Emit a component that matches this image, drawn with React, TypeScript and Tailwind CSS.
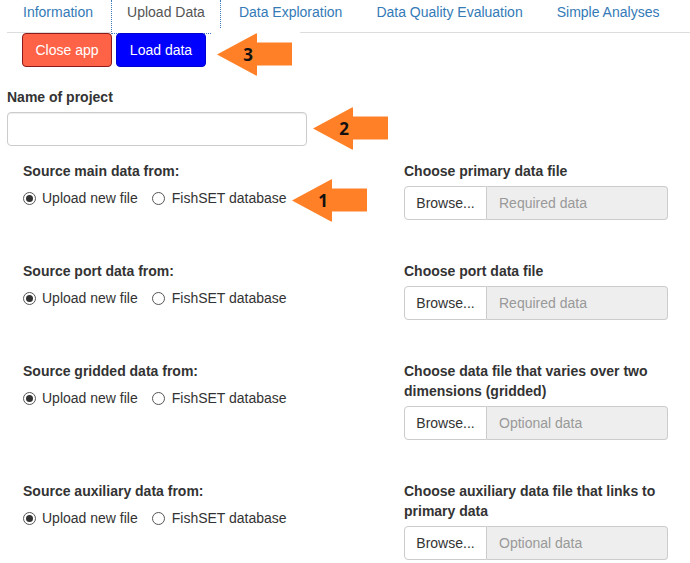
import React from "react";

function Arrow({ n }: { n: string }) {
  return (
    <svg width="75" height="43" viewBox="0 0 75 43">
      <path d="M0 21.5 L39 0.5 Q40 0 40 1 L40 9.5 L75 9.5 L75 32.5 L40 32.5 L40 42 Q40 43 39 42.5 Z" fill="#ff8026" />
      <text x="31" y="28" textAnchor="middle" fontFamily="'Open Sans', 'Liberation Sans', sans-serif" fontWeight="700" fontSize="17" fill="#111">
        {n}
      </text>
    </svg>
  );
}

function Radio({ checked }: { checked: boolean }) {
  return (
    <span className="w-[13px] h-[13px] rounded-full border border-[#555] bg-white flex items-center justify-center shrink-0">
      {checked && <span className="w-[7px] h-[7px] rounded-full bg-[#333]" />}
    </span>
  );
}

function Source({ title }: { title: string }) {
  return (
    <div>
      <div className="font-bold leading-[20px] whitespace-nowrap">{title}</div>
      <div className="mt-[7px] flex items-center h-[20px] whitespace-nowrap">
        <Radio checked />
        <span className="ml-[6px]">Upload new file</span>
        <span className="ml-[14px]">
          <Radio checked={false} />
        </span>
        <span className="ml-[7px]">FishSET database</span>
      </div>
    </div>
  );
}

function FileInput({ title, placeholder }: { title: React.ReactNode; placeholder: string }) {
  return (
    <div className="pb-[41px]">
      <div className="font-bold leading-[20px] whitespace-nowrap">{title}</div>
      <div className="mt-[5px] flex h-[34px] w-[264px]">
        <div className="w-[83px] border border-[#ccc] rounded-l-[4px] bg-white flex items-center justify-center text-[#333]">
          Browse...
        </div>
        <div className="flex-1 bg-[#eee] border border-l-0 border-[#ccc] rounded-r-[4px] pl-[12px] flex items-center text-[#999]">
          {placeholder}
        </div>
      </div>
    </div>
  );
}

export default function App() {
  const tabs = ["Information", "Upload Data", "Data Exploration", "Data Quality Evaluation", "Simple Analyses"];
  return (
    <div className="relative w-[690px] h-[563px] overflow-hidden bg-white text-[14px] text-[#333] font-['Liberation_Sans',Arial,sans-serif]">
      <div className="ml-[7px] flex items-start border-b border-[#ddd] h-[33px]">
        {tabs.map((t) =>
          t === "Upload Data" ? (
            <div
              key={t}
              className="mr-[2px] h-[34px] px-[15px] pt-[2px] leading-[20px] bg-white text-[#555] border-x border-b border-dotted border-[#3f7cbf] whitespace-nowrap"
            >
              {t}
            </div>
          ) : (
            <div key={t} className="mr-[2px] h-[32px] px-[16px] pt-[2px] leading-[20px] text-[#337ab7] whitespace-nowrap">
              {t}
            </div>
          )
        )}
      </div>

      <div className="ml-[22px] flex gap-[4px]">
        <div className="w-[90px] h-[34px] flex items-center justify-center rounded-[4px] bg-[#ff6347] border border-[#8b1a1a] text-white">
          Close app
        </div>
        <div className="w-[90px] h-[34px] flex items-center justify-center rounded-[4px] bg-[#0000ff] border border-[#0000d0] text-white">
          Load data
        </div>
      </div>

      <div className="ml-[7px] mt-[20px] font-bold leading-[20px]">Name of project</div>
      <div className="ml-[7px] mt-[5px] w-[300px] h-[34px] border border-[#ccc] rounded-[4px] shadow-[inset_0_1px_1px_rgba(0,0,0,0.075)]" />

      <div className="mt-[15px] pl-[23px] grid grid-cols-[381px_264px]">
        <Source title="Source main data from:" />
        <FileInput title="Choose primary data file" placeholder="Required data" />
        <Source title="Source port data from:" />
        <FileInput title="Choose port data file" placeholder="Required data" />
        <Source title="Source gridded data from:" />
        <FileInput
          title={
            <>
              Choose data file that varies over two
              <br />
              dimensions (gridded)
            </>
          }
          placeholder="Optional data"
        />
        <Source title="Source auxiliary data from:" />
        <FileInput
          title={
            <>
              Choose auxiliary data file that links to
              <br />
              primary data
            </>
          }
          placeholder="Optional data"
        />
      </div>

      <div className="absolute left-[212px] top-[28px] w-[88px] h-[48px] bg-white">
        <div className="absolute left-[5px] top-[5px]">
          <Arrow n="3" />
        </div>
      </div>
      <div className="absolute left-[313px] top-[107px]">
        <Arrow n="2" />
      </div>
      <div className="absolute left-[292px] top-[179px]">
        <Arrow n="1" />
      </div>
    </div>
  );
}
